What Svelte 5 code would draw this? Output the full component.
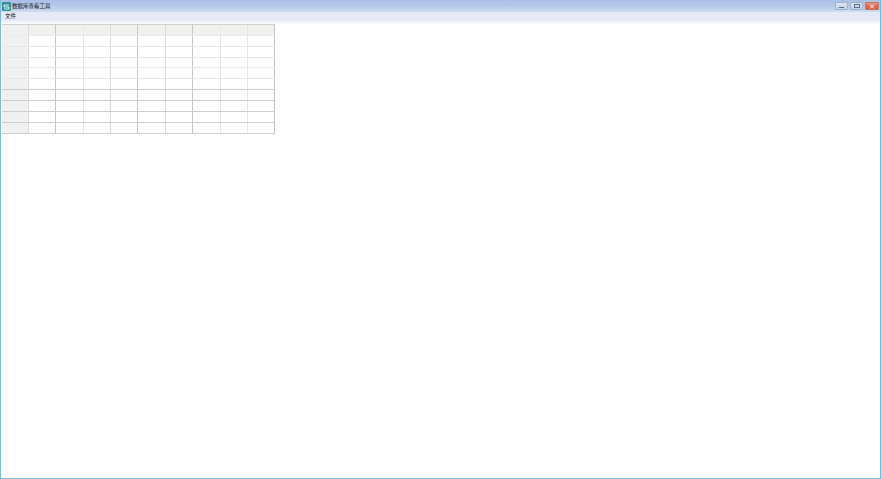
<script>
  const colW = [27, 27, 28, 27, 27, 28, 27, 28, 27, 27];
  const vLine = ['#dadada', '#c6c6c6', '#e6e6e6', '#dadada', '#c6c6c6', '#dadada', '#c6c6c6', '#e6e6e6', '#e4e4e4', '#c0c0c0'];
  const rowH = [11, 11, 11, 10, 11, 11, 11, 11, 11, 11];
  const hLine = ['#eaeaea', '#e8e8e8', '#e8e8e8', '#e8e8e8', '#e8e8e8', '#cdcdcd', '#cdcdcd', '#cdcdcd', '#cdcdcd', '#d0d0d0'];
  const cols = colW.map((w, i) => ({ w, line: vLine[i], i }));
  const rows = rowH.map((h, i) => ({ h, line: hLine[i], i }));
</script>

<div class="window">
  <header class="titlebar">
    <div class="title">
      <svg class="logo" width="9" height="9" viewBox="0 0 9 9">
        <rect width="9" height="9" rx="1" fill="#2e8f94" />
        <path d="M2 3h5M2 3v2h5v2H2" fill="none" stroke="#dff3f2" stroke-width="1" />
      </svg>
      <span>数据库查看工具</span>
    </div>
    <div class="controls">
      <span class="btn min"><i></i></span>
      <span class="btn max"><i></i></span>
      <span class="btn close">
        <svg width="8" height="5" viewBox="0 0 8 5"><path d="M2 .5l4 4M6 .5l-4 4" stroke="#fff" stroke-width="1" /></svg>
      </span>
    </div>
  </header>
  <nav class="menubar"><span>文件</span></nav>
  <main class="content">
    <div class="table">
      {#each rows as r}
        <div class="row" style="height:{r.h - 1}px;border-bottom-color:{r.line}">
          {#each cols as c}
            <div
              class="cell"
              class:head={r.i === 0 && c.i > 0}
              class:side={c.i === 0}
              style="width:{c.w - 1}px;border-right-color:{c.line}"
            ></div>
          {/each}
        </div>
      {/each}
    </div>
  </main>
</div>

<style>
  :global(body) {
    margin: 0;
    background: #fff;
  }
  .window {
    box-sizing: border-box;
    width: 881px;
    height: 479px;
    display: flex;
    flex-direction: column;
    border: 1px solid #62c4e2;
    border-top: 0;
    font-family: "Noto Sans CJK SC", "Liberation Sans", sans-serif;
    color: #111;
    overflow: hidden;
  }
  .titlebar {
    height: 12px;
    flex: none;
    display: flex;
    justify-content: space-between;
    background: linear-gradient(#a9c0e4, #b4c9e8 50%, #cfdcf0);
  }
  .title {
    display: flex;
    align-items: center;
    gap: 1px;
    padding-left: 1px;
    font-size: 5.5px;
    line-height: 12px;
    white-space: nowrap;
  }
  .logo {
    flex: none;
  }
  .controls {
    display: flex;
    gap: 2px;
    padding-right: 1px;
    height: 8px;
    margin-top: 2px;
  }
  .btn {
    box-sizing: border-box;
    height: 8px;
    border: 1px solid #9fb2cc;
    border-radius: 1px;
    display: flex;
    align-items: center;
    justify-content: center;
    background: linear-gradient(#dbe5f3, #c3d3e8);
  }
  .min {
    width: 13px;
  }
  .min i {
    width: 5px;
    height: 1px;
    margin-top: 2px;
    background: #5a6c84;
  }
  .max {
    width: 13px;
  }
  .max i {
    box-sizing: border-box;
    width: 6px;
    height: 4px;
    border: 1px solid #5a6c84;
  }
  .close {
    width: 14px;
    border-color: #c9745f;
    background: linear-gradient(#e8897a, #d4552f);
  }
  .close svg {
    display: block;
  }
  .menubar {
    height: 9px;
    flex: none;
    padding-left: 4px;
    font-size: 5.5px;
    line-height: 8px;
    background: linear-gradient(#e4eaf7, #e7e8f7);
  }
  .content {
    flex: 1;
    padding-top: 2px;
    padding-left: 1px;
    border-top: 1px solid #f0f3fa;
    background: linear-gradient(#f3f5fb, #fff 2px);
  }
  .table {
    width: max-content;
    border-top: 1px solid #cfcfcf;
  }
  .row {
    display: flex;
    border-bottom: 1px solid;
  }
  .cell {
    height: 100%;
    border-right: 1px solid;
    background: #fff;
  }
  .head {
    background: #f0f0ee;
  }
  .side {
    background: #f0f0f0;
  }
</style>
